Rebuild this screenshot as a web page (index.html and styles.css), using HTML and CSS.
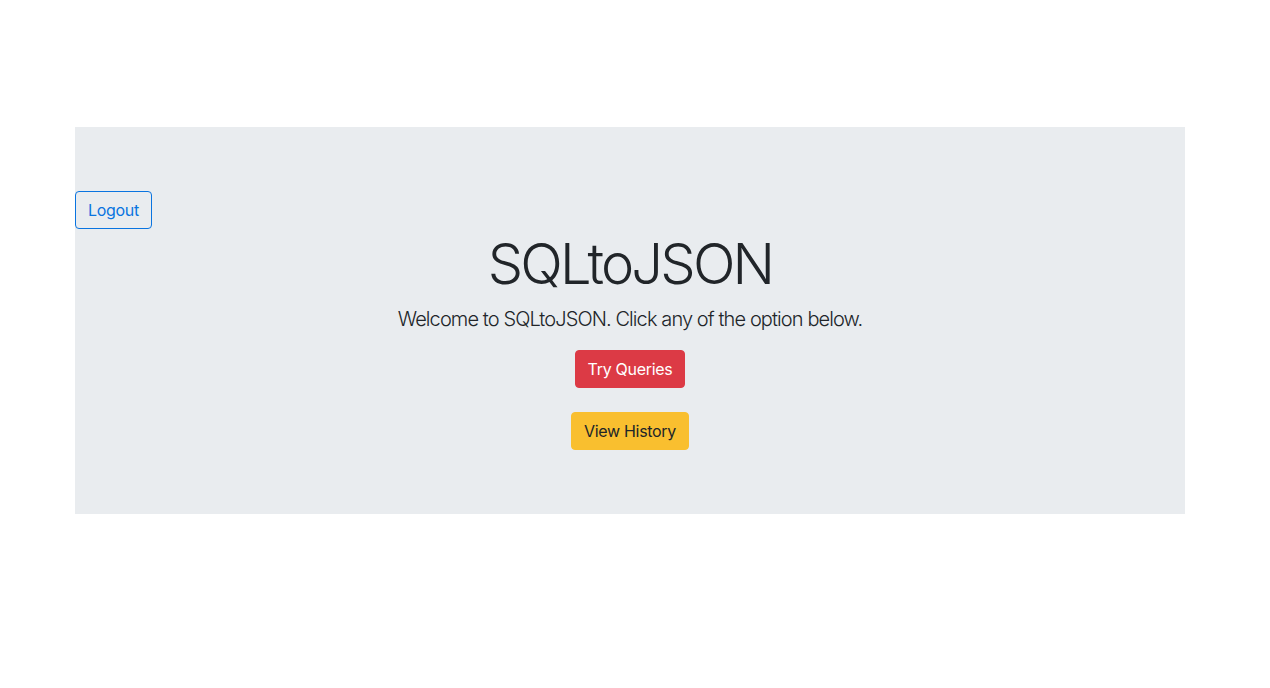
FILE: index.html
```html
<!DOCTYPE html>
<html lang="en">
<head>
<meta charset="utf-8">
<title>SQLtoJSON</title>
<link rel="stylesheet" href="styles.css">
</head>
<body>
<div class="container">
  <div class="jumbotron">
    <div class="top-bar">
      <button class="btn btn-outline-primary">Logout</button>
    </div>
    <div class="center">
      <h1 class="display">SQLtoJSON</h1>
      <p class="lead">Welcome to SQLtoJSON. Click any of the option below.</p>
      <div class="actions">
        <button class="btn btn-danger">Try Queries</button>
        <button class="btn btn-warning">View History</button>
      </div>
    </div>
  </div>
</div>
</body>
</html>
```

FILE: styles.css
```css
* { box-sizing: border-box; }
html, body { margin: 0; padding: 0; }
body {
  font-family: Inter, "Noto Sans", "Liberation Sans", sans-serif;
  font-size: 16px;
  line-height: 1.5;
  color: #212529;
  background: #fff;
}
.container {
  width: 1110px;
  margin: 127px 0 0 75px;
}
.jumbotron {
  background: #e9ecef;
  padding: 64px 0;
}
.top-bar { display: flex; }
.center {
  display: flex;
  flex-direction: column;
  align-items: center;
  text-align: center;
}
.display {
  font-size: 56px;
  font-weight: 300;
  line-height: 1.2;
  margin: 2px 0 6px;
  letter-spacing: -2.8px;
}
.lead {
  font-size: 20px;
  font-weight: 300;
  margin: 0 0 16px;
  line-height: 30px;
  letter-spacing: -0.9px;
}
.actions {
  display: flex;
  flex-direction: column;
  align-items: center;
  gap: 24px;
}
.btn {
  font-family: inherit;
  font-size: 16px;
  line-height: 24px;
  padding: 6px 12px;
  border: 1px solid transparent;
  border-radius: 4px;
  letter-spacing: -0.3px;
  cursor: pointer;
}
.btn-outline-primary {
  color: #0a74e0;
  border-color: #0a74e0;
  background: transparent;
}
.btn-danger {
  color: #fff;
  background: #dc3a45;
  border-color: #dc3a45;
}
.btn-warning {
  color: #212529;
  background: #f9bf2f;
  border-color: #f9bf2f;
}
```
